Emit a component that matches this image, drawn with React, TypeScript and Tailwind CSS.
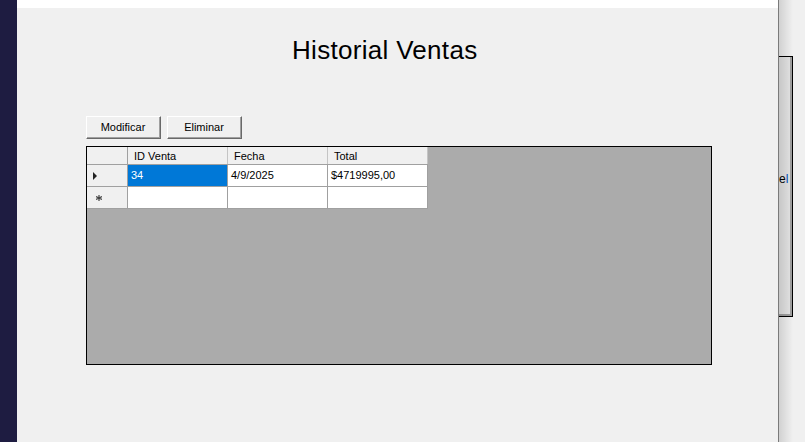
import React from "react";

const cols = ["ID Venta", "Fecha", "Total"];

function WinButton({ label }: { label: string }) {
  return (
    <div className="w-[75px] h-[23px] border border-t-white border-l-white border-b-[#696969] border-r-[#696969] bg-[#f0f0f0]">
      <div className="w-full h-full border-b border-r border-[#a0a0a0] flex items-center justify-center text-[11px] leading-none text-black">
        {label}
      </div>
    </div>
  );
}

export default function App() {
  return (
    <div
      className="w-[805px] h-[442px] flex overflow-hidden bg-[#f0f0f0]"
      style={{ fontFamily: '"Liberation Sans", Arial, sans-serif' }}
    >
      {/* left dark strip */}
      <div className="w-[17px] h-full bg-[#1e1c41] shrink-0" />

      {/* main form */}
      <div className="w-[761px] h-full flex flex-col shrink-0">
        <div className="h-[8px] bg-white" />
        <div className="flex-1 bg-[#f0f0f0] flex flex-col">
          <div className="pl-[275px] pt-[29px] h-[55px]">
            <div className="text-[26px] leading-[26px] tracking-[0.3px] text-black">Historial Ventas</div>
          </div>

          <div className="pl-[69px] pt-[53px] flex gap-[6px]">
            <WinButton label="Modificar" />
            <WinButton label="Eliminar" />
          </div>

          <div className="ml-[69px] mt-[7px] w-[626px] h-[219px] border border-black bg-[#ababab]">
            {/* header row */}
            <div className="flex w-[341px] h-[18px] bg-[#f0f0f0] border-b border-[#a0a0a0]">
              <div className="w-[41px] shrink-0 border-r border-[#a0a0a0]" />
              {cols.map((c) => (
                <div
                  key={c}
                  className="w-[100px] shrink-0 border-r border-[#c4c4c4] pl-[6px] pt-[3px] text-[11px] leading-[13px] text-black"
                >
                  {c}
                </div>
              ))}
            </div>
            {/* row 1 */}
            <div className="flex w-[341px] h-[22px] border-b border-[#a0a0a0]">
              <div className="w-[41px] shrink-0 bg-[#f0f0f0] border-r border-[#a0a0a0] flex items-center pl-[6px]">
                <svg width="5" height="8" viewBox="0 0 5 8">
                  <path d="M0 0 L4 4 L0 8 Z" fill="#222" />
                </svg>
              </div>
              <div className="w-[100px] shrink-0 bg-[#0078d7] border-r border-[#a0a0a0] pl-[3px] text-[11px] leading-[21px] text-white">
                34
              </div>
              <div className="w-[100px] shrink-0 bg-white border-r border-[#a0a0a0] pl-[3px] text-[11px] leading-[21px] text-black">
                4/9/2025
              </div>
              <div className="w-[100px] shrink-0 bg-white border-r border-[#a0a0a0] pl-[3px] text-[11px] leading-[21px] text-black">
                $4719995,00
              </div>
            </div>
            {/* new row */}
            <div className="flex w-[341px] h-[22px] border-b border-[#a0a0a0]">
              <div className="w-[41px] shrink-0 bg-[#f0f0f0] border-r border-[#a0a0a0] flex items-center pl-[9px]">
                <svg width="6" height="6" viewBox="0 0 6 6">
                  <path d="M3 0 V6 M0 1.5 L6 4.5 M0 4.5 L6 1.5" stroke="#444" strokeWidth="1.2" />
                </svg>
              </div>
              <div className="w-[100px] shrink-0 bg-white border-r border-[#a0a0a0]" />
              <div className="w-[100px] shrink-0 bg-white border-r border-[#a0a0a0]" />
              <div className="w-[100px] shrink-0 bg-white border-r border-[#a0a0a0]" />
            </div>
          </div>
        </div>
      </div>

      {/* right: window behind with shadow */}
      <div className="relative flex-1 h-full border-l border-[#7a7a7a] bg-[#f0f0f0] overflow-hidden">
        <div className="mt-[56px] w-[14px] h-[261px] border-t border-r border-b border-black bg-[#e4e4e4] flex">
          <div className="flex-1 border-r-2 border-b-2 border-[#a0a0a0] flex items-start pt-[115px] overflow-hidden">
            <span className="text-[12px] leading-[14px] whitespace-nowrap text-black">
              e<span className="text-[#0050c0]">l</span>
            </span>
          </div>
        </div>
        <div className="absolute inset-y-0 left-0 w-[14px] pointer-events-none bg-gradient-to-r from-[rgba(0,0,0,0.13)] to-transparent" />
      </div>
    </div>
  );
}
